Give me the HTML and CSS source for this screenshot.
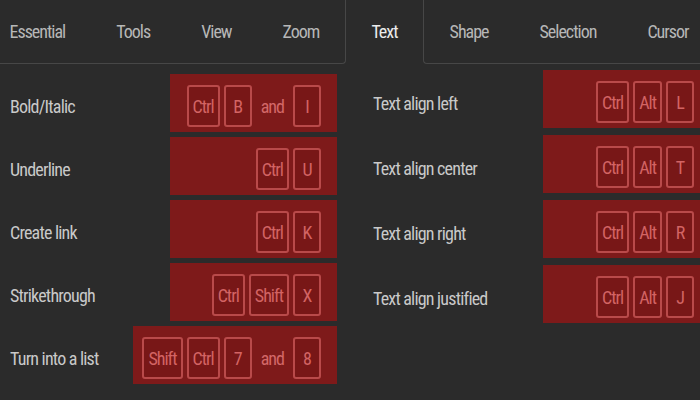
FILE: index.html
```html
<!DOCTYPE html>
<html lang="en">
<head>
<meta charset="utf-8">
<title>Keyboard shortcuts</title>
<link rel="stylesheet" href="styles.css">
</head>
<body>
<div class="page">
  <nav class="tabs">
    <div class="tab-group tab-group-left">
      <span class="tab">Essential</span>
      <span class="tab">Tools</span>
      <span class="tab">View</span>
      <span class="tab">Zoom</span>
    </div>
    <span class="tab tab-active">Text</span>
    <div class="tab-group tab-group-right">
      <span class="tab">Shape</span>
      <span class="tab">Selection</span>
      <span class="tab">Cursor</span>
    </div>
  </nav>
  <main class="columns">
    <section class="col col-left">
      <div class="row"><span class="label">Bold/Italic</span><div class="combo"><kbd class="key">Ctrl</kbd><kbd class="key">B</kbd><span class="and">and</span><kbd class="key">I</kbd></div></div>
      <div class="row"><span class="label">Underline</span><div class="combo"><kbd class="key">Ctrl</kbd><kbd class="key">U</kbd></div></div>
      <div class="row"><span class="label">Create link</span><div class="combo"><kbd class="key">Ctrl</kbd><kbd class="key">K</kbd></div></div>
      <div class="row"><span class="label">Strikethrough</span><div class="combo"><kbd class="key">Ctrl</kbd><kbd class="key">Shift</kbd><kbd class="key">X</kbd></div></div>
      <div class="row"><span class="label">Turn into a list</span><div class="combo"><kbd class="key">Shift</kbd><kbd class="key">Ctrl</kbd><kbd class="key">7</kbd><span class="and">and</span><kbd class="key">8</kbd></div></div>
    </section>
    <section class="col col-right">
      <div class="row"><span class="label">Text align left</span><div class="combo"><kbd class="key">Ctrl</kbd><kbd class="key">Alt</kbd><kbd class="key">L</kbd></div></div>
      <div class="row"><span class="label">Text align center</span><div class="combo"><kbd class="key">Ctrl</kbd><kbd class="key">Alt</kbd><kbd class="key">T</kbd></div></div>
      <div class="row"><span class="label">Text align right</span><div class="combo"><kbd class="key">Ctrl</kbd><kbd class="key">Alt</kbd><kbd class="key">R</kbd></div></div>
      <div class="row"><span class="label">Text align justified</span><div class="combo"><kbd class="key">Ctrl</kbd><kbd class="key">Alt</kbd><kbd class="key">J</kbd></div></div>
    </section>
  </main>
</div>
</body>
</html>
```

FILE: styles.css
```css
html, body {
  margin: 0;
  padding: 0;
  background: #2b2b2b;
  overflow: hidden;
  height: 100%;
}

body {
  font-family: "Roboto Condensed", "Roboto", sans-serif;
  font-stretch: condensed;
  font-size: 18px;
  letter-spacing: -0.8px;
  color: #c8c8c8;
}

.page {
  width: 760px;
}

.tabs {
  display: flex;
  margin-left: -16px;
  height: 64px;
}

.tab-group {
  display: flex;
  border-bottom: 1px solid #474747;
  box-sizing: border-box;
}

.tab-group-left {
  border-right: 1px solid #474747;
  border-bottom-right-radius: 4px;
}

.tab-group-right {
  border-left: 1px solid #474747;
  border-bottom-left-radius: 4px;
  flex: 1;
}

.tab {
  display: flex;
  align-items: center;
  padding: 0 25.5px;
  height: 63px;
  letter-spacing: -1px;
  color: #b7b7b7;
}

.tab-active {
  color: #ececec;
}

.columns {
  display: grid;
  grid-template-columns: 327px 337px;
  column-gap: 36px;
  margin-left: 10px;
  align-items: start;
}

.col {
  display: flex;
  flex-direction: column;
}

.col-left {
  padding-top: 10px;
  gap: 5px;
}

.col-right {
  padding-top: 6px;
  gap: 7px;
}

.row {
  display: flex;
  align-items: center;
  justify-content: space-between;
  height: 58px;
}

.label {
  padding-top: 6px;
  color: #c9c9c9;
}

.col-right .label {
  padding-top: 8px;
}

.combo {
  display: flex;
  align-items: center;
  justify-content: flex-end;
  gap: 4px;
  box-sizing: border-box;
  height: 58px;
  min-width: 167px;
  padding: 11px 16px 5px 9px;
  background: #7e1a1a;
}

.key {
  display: flex;
  align-items: center;
  justify-content: center;
  box-sizing: border-box;
  height: 42px;
  min-width: 28px;
  padding: 0 4px;
  border: 2px solid #b94a4a;
  border-radius: 3px;
  background: #781717;
  color: #d36464;
  font-family: inherit;
  font-size: 18px;
  letter-spacing: -1px;
}

.and {
  margin: 0 5px;
  letter-spacing: -1px;
  color: #d36868;
}
```
